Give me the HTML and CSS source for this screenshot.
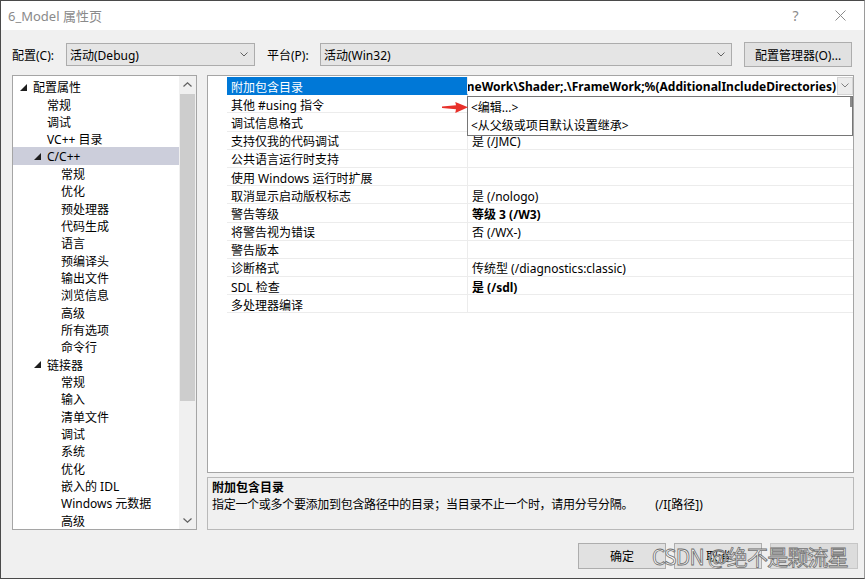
FILE: index.html
```html
<!DOCTYPE html>
<html lang="zh-CN">
<head>
<meta charset="utf-8">
<title>6_Model 属性页</title>
<link rel="stylesheet" href="styles.css">
</head>
<body>
<div class="window">
  <div class="titlebar">
    <span class="title">6_Model 属性页</span>
    <span class="tb-btn tb-help">?</span>
    <span class="tb-btn tb-close"><svg width="11" height="11" viewBox="0 0 11 11"><path d="M0.5 0.5L10.5 10.5M10.5 0.5L0.5 10.5" stroke="#8a8a8a" stroke-width="1" fill="none"/></svg></span>
  </div>

  <div class="config-row">
    <span class="cfg-label">配置(C):</span>
    <div class="combo combo-config"><span class="combo-text">活动(Debug)</span><svg class="chev" width="8" height="5" viewBox="0 0 8 5"><path d="M0.5 0.5L4 4L7.5 0.5" stroke="#606060" fill="none"/></svg></div>
    <span class="cfg-label cfg-label-2">平台(P):</span>
    <div class="combo combo-platform"><span class="combo-text">活动(Win32)</span><svg class="chev" width="8" height="5" viewBox="0 0 8 5"><path d="M0.5 0.5L4 4L7.5 0.5" stroke="#606060" fill="none"/></svg></div>
    <button class="btn btn-manager">配置管理器(O)...</button>
  </div>

  <div class="main">
    <div class="tree">
      <div class="tree-list">
        <div class="trow l0"><span class="arrow"><svg width="7" height="7" viewBox="0 0 7 7"><path d="M7 0V7H0Z" fill="#1e1e1e"/></svg></span>配置属性</div>
        <div class="trow l1"><span class="arrow"></span>常规</div>
        <div class="trow l1"><span class="arrow"></span>调试</div>
        <div class="trow l1"><span class="arrow"></span>VC++ 目录</div>
        <div class="trow l1 selected"><span class="arrow"><svg width="7" height="7" viewBox="0 0 7 7"><path d="M7 0V7H0Z" fill="#1e1e1e"/></svg></span>C/C++</div>
        <div class="trow l2"><span class="arrow"></span>常规</div>
        <div class="trow l2"><span class="arrow"></span>优化</div>
        <div class="trow l2"><span class="arrow"></span>预处理器</div>
        <div class="trow l2"><span class="arrow"></span>代码生成</div>
        <div class="trow l2"><span class="arrow"></span>语言</div>
        <div class="trow l2"><span class="arrow"></span>预编译头</div>
        <div class="trow l2"><span class="arrow"></span>输出文件</div>
        <div class="trow l2"><span class="arrow"></span>浏览信息</div>
        <div class="trow l2"><span class="arrow"></span>高级</div>
        <div class="trow l2"><span class="arrow"></span>所有选项</div>
        <div class="trow l2"><span class="arrow"></span>命令行</div>
        <div class="trow l1"><span class="arrow"><svg width="7" height="7" viewBox="0 0 7 7"><path d="M7 0V7H0Z" fill="#1e1e1e"/></svg></span>链接器</div>
        <div class="trow l2"><span class="arrow"></span>常规</div>
        <div class="trow l2"><span class="arrow"></span>输入</div>
        <div class="trow l2"><span class="arrow"></span>清单文件</div>
        <div class="trow l2"><span class="arrow"></span>调试</div>
        <div class="trow l2"><span class="arrow"></span>系统</div>
        <div class="trow l2"><span class="arrow"></span>优化</div>
        <div class="trow l2"><span class="arrow"></span>嵌入的 IDL</div>
        <div class="trow l2"><span class="arrow"></span>Windows 元数据</div>
        <div class="trow l2"><span class="arrow"></span>高级</div>
      </div>
      <div class="vscroll">
        <div class="sb-btn"><svg width="9" height="5" viewBox="0 0 9 5"><path d="M0.5 4.5L4.5 0.8L8.5 4.5" stroke="#606060" stroke-width="1.2" fill="none"/></svg></div>
        <div class="sb-track"><div class="sb-thumb"></div></div>
        <div class="sb-btn"><svg width="9" height="5" viewBox="0 0 9 5"><path d="M0.5 0.5L4.5 4.2L8.5 0.5" stroke="#606060" stroke-width="1.2" fill="none"/></svg></div>
      </div>
    </div>

    <div class="right">
      <div class="grid">
        <div class="prow"><div class="gutter"></div><div class="pname sel">附加包含目录</div><div class="pval editor"><div class="clip"><span>FrameWork\Shader;.\FrameWork;%(AdditionalIncludeDirectories)</span></div><div class="ddbtn"><svg width="8" height="5" viewBox="0 0 8 5"><path d="M0.5 0.5L4 4L7.5 0.5" stroke="#808080" fill="none"/></svg></div></div></div>
        <div class="prow"><div class="gutter"></div><div class="pname">其他 #using 指令</div><div class="pval"></div></div>
        <div class="prow"><div class="gutter"></div><div class="pname">调试信息格式</div><div class="pval"></div></div>
        <div class="prow"><div class="gutter"></div><div class="pname">支持仅我的代码调试</div><div class="pval">是 (/JMC)</div></div>
        <div class="prow"><div class="gutter"></div><div class="pname">公共语言运行时支持</div><div class="pval"></div></div>
        <div class="prow"><div class="gutter"></div><div class="pname">使用 Windows 运行时扩展</div><div class="pval"></div></div>
        <div class="prow"><div class="gutter"></div><div class="pname">取消显示启动版权标志</div><div class="pval">是 (/nologo)</div></div>
        <div class="prow"><div class="gutter"></div><div class="pname">警告等级</div><div class="pval bold">等级 3 (/W3)</div></div>
        <div class="prow"><div class="gutter"></div><div class="pname">将警告视为错误</div><div class="pval">否 (/WX-)</div></div>
        <div class="prow"><div class="gutter"></div><div class="pname">警告版本</div><div class="pval"></div></div>
        <div class="prow"><div class="gutter"></div><div class="pname">诊断格式</div><div class="pval">传统型 (/diagnostics:classic)</div></div>
        <div class="prow"><div class="gutter"></div><div class="pname">SDL 检查</div><div class="pval bold">是 (/sdl)</div></div>
        <div class="prow"><div class="gutter"></div><div class="pname">多处理器编译</div><div class="pval"></div></div>
        <div class="grid-fill"><div class="gutter"></div><div class="fill-rest"></div></div>

        <div class="popup">
          <div class="pop-item">&lt;编辑...&gt;</div>
          <div class="pop-item">&lt;从父级或项目默认设置继承&gt;</div>
          <div class="pop-mark"></div>
        </div>
        <svg class="red-arrow" width="27" height="13" viewBox="0 0 27 13"><path d="M0 5.6L14 4.3L13.3 1L26 6.3L13.3 12L14 8.2L0 7Z" fill="#e8302a"/></svg>
      </div>
      <div class="desc">
        <div class="desc-title">附加包含目录</div>
        <div class="desc-text">指定一个或多个要添加到包含路径中的目录；当目录不止一个时，请用分号分隔。<span class="desc-switch">(/I[路径])</span></div>
      </div>
    </div>
  </div>

  <div class="footer">
    <button class="btn fbtn">确定</button>
    <button class="btn fbtn">取消</button>
    <button class="btn fbtn disabled">应用</button>
    <div class="watermark">CSDN @绝不是颗流星</div>
  </div>
</div>
</body>
</html>
```

FILE: styles.css
```css
* { box-sizing: border-box; }
html, body { margin: 0; padding: 0; }
body {
  width: 865px;
  height: 579px;
  overflow: hidden;
  background: #f0f0f0;
  font-family: "Noto Sans", "Noto Sans CJK SC", sans-serif;
  font-size: 12px;
  color: #000;
}
.window {
  width: 865px;
  height: 579px;
  border: 1px solid #4a4a4a;
  border-right-color: #9a9a9a;
  display: flex;
  flex-direction: column;
  position: relative;
}

/* title bar */
.titlebar {
  height: 29px;
  background: #fff;
  display: flex;
  align-items: center;
  padding-left: 7px;
  flex-shrink: 0;
}
.title { font-size: 13px; color: #8a8a8a; flex: 1; }
.tb-btn { display: flex; align-items: center; justify-content: center; height: 29px; color: #8a8a8a; }
.tb-help { width: 43px; font-size: 14px; }
.tb-close { width: 47px; }

/* config row */
.config-row {
  display: flex;
  align-items: center;
  padding: 13px 0 0 11px;
  height: 36px;
  flex-shrink: 0;
}
.cfg-label { width: 54px; white-space: nowrap; }
.cfg-label-2 { margin-left: 12px; width: 53px; }
.combo {
  height: 23px;
  background: #e5e5e5;
  border: 1px solid #acacac;
  display: flex;
  align-items: center;
  padding: 0 6px 0 3px;
}
.combo-text { flex: 1; }
.combo-config { width: 189px; }
.combo-platform { width: 412px; }
.btn {
  font-family: inherit;
  font-size: 12px;
  color: #000;
  background: #e1e1e1;
  border: 1px solid #adadad;
  padding: 0;
}
.btn-manager { margin-left: 12px; width: 108px; height: 25px; }

/* main */
.main {
  display: flex;
  gap: 10px;
  padding-left: 11px;
  margin-top: 9px;
  height: 455px;
  flex-shrink: 0;
}
.tree {
  width: 185px;
  border: 1px solid #a5a5a5;
  background: #fff;
  display: flex;
  overflow: hidden;
}
.tree-list { flex: 1; padding-top: 2px; }
.trow {
  height: 17.35px;
  display: flex;
  align-items: center;
  white-space: nowrap;
  padding-top: 1px;
}
.trow.l0 { padding-left: 7px; }
.trow.l1 { padding-left: 21px; }
.trow.l2 { padding-left: 35px; }
.trow.selected { background: #cccedb; }
.arrow { width: 13px; flex-shrink: 0; display: flex; align-items: center; }

.vscroll {
  width: 17px;
  background: #f0f0f0;
  display: flex;
  flex-direction: column;
}
.sb-btn { height: 17px; display: flex; align-items: center; justify-content: center; flex-shrink: 0; }
.sb-track { flex: 1; padding: 1px 1px 0 1px; }
.sb-thumb { height: 307px; background: #cdcdcd; }

/* right column */
.right {
  width: 647px;
  display: flex;
  flex-direction: column;
  gap: 4px;
}
.grid {
  height: 398px;
  border: 1px solid #a5a5a5;
  background: #fff;
  display: flex;
  flex-direction: column;
  padding-top: 1px;
  position: relative;
}
.prow {
  height: 18.2px;
  display: flex;
  flex-shrink: 0;
}
.gutter { width: 19px; flex-shrink: 0; }
.pname {
  width: 241px;
  flex-shrink: 0;
  padding-left: 4px;
  padding-top: 2px;
  border-right: 1px solid #ececec;
  border-bottom: 1px solid #ececec;
  display: flex;
  align-items: center;
  white-space: nowrap;
}
.pname.sel { background: #0078d7; color: #fff; border-bottom-color: #0078d7; }
.pval {
  flex: 1;
  padding-left: 4px;
  padding-top: 2px;
  border-bottom: 1px solid #ececec;
  display: flex;
  align-items: center;
  white-space: nowrap;
  min-width: 0;
}
.bold { font-weight: 700; }
.pval.editor { padding-left: 0; padding-top: 0; border-bottom-color: #fff; }
.clip {
  flex: 1;
  overflow: hidden;
  display: flex;
  justify-content: flex-end;
  font-weight: 700;
  white-space: nowrap;
  padding-top: 2px;
}
.clip span { flex-shrink: 0; padding-right: 1px; }
.ddbtn {
  width: 16px;
  height: 18px;
  background: #ececec;
  border: 1px solid #d4d4d4;
  display: flex;
  align-items: center;
  justify-content: center;
  flex-shrink: 0;
}
.grid-fill { flex: 1; display: flex; }
.fill-rest { flex: 1; }

.popup {
  position: absolute;
  left: 259px;
  top: 20px;
  width: 386px;
  height: 40px;
  background: #fff;
  border: 1px solid #767676;
  padding-top: 1px;
}
.pop-item { height: 18px; line-height: 19px; padding-left: 3px; white-space: nowrap; }
.pop-mark {
  position: absolute;
  right: 0;
  top: 0;
  width: 2px;
  height: 10px;
  background: #8a8a8a;
}
.red-arrow { position: absolute; left: 234px; top: 25px; }

.desc {
  height: 53px;
  border: 1px solid #b9b9b9;
  background: #f0f0f0;
  padding: 0 4px;
}
.desc-title { font-weight: 700; height: 18px; line-height: 19px; }
.desc-text { height: 18px; line-height: 18px; letter-spacing: -0.3px; white-space: nowrap; }
.desc-switch { margin-left: 22px; letter-spacing: 0; }

/* footer */
.footer {
  display: flex;
  justify-content: flex-end;
  gap: 8px;
  padding-right: 6px;
  margin-top: 13px;
  height: 26px;
  position: relative;
}
.fbtn { width: 88px; height: 26px; }
.fbtn.disabled { color: #a0a0a0; background: #dcdcdc; border-color: #c6c6c6; }
.watermark {
  position: absolute;
  right: 16px;
  top: 0;
  font-family: "Noto Sans CJK SC", sans-serif;
  font-size: 21px;
  line-height: 26px;
  color: rgba(255, 255, 255, 0.95);
  -webkit-text-stroke: 0.8px #6e6e6e;
  white-space: nowrap;
  letter-spacing: -0.8px;
}
```
